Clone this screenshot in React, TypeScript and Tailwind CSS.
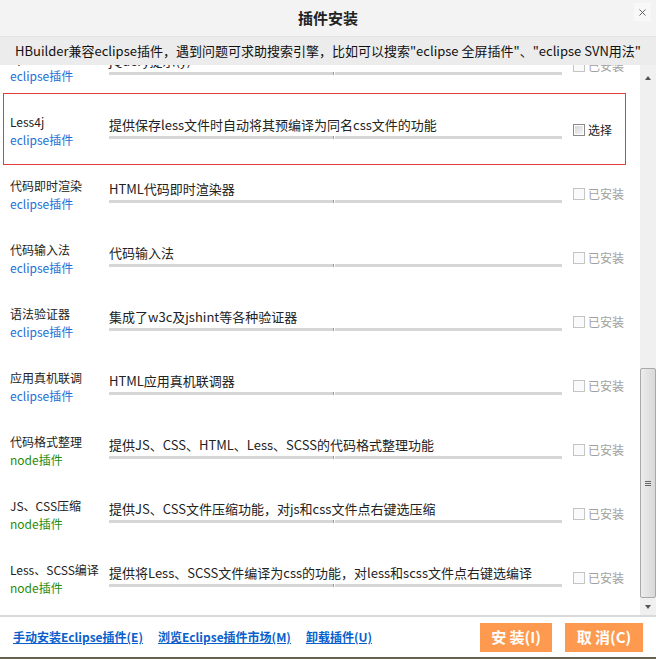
import { X } from "lucide-react";

type Plugin = {
  name: string;
  kind: "eclipse" | "node";
  desc: string;
  selected?: boolean;
};

const plugins: Plugin[] = [
  { name: "Aptana插件", kind: "eclipse", desc: "jQuery提示(y)" },
  { name: "Less4j", kind: "eclipse", desc: "提供保存less文件时自动将其预编译为同名css文件的功能", selected: true },
  { name: "代码即时渲染", kind: "eclipse", desc: "HTML代码即时渲染器" },
  { name: "代码输入法", kind: "eclipse", desc: "代码输入法" },
  { name: "语法验证器", kind: "eclipse", desc: "集成了w3c及jshint等各种验证器" },
  { name: "应用真机联调", kind: "eclipse", desc: "HTML应用真机联调器" },
  { name: "代码格式整理", kind: "node", desc: "提供JS、CSS、HTML、Less、SCSS的代码格式整理功能" },
  { name: "JS、CSS压缩", kind: "node", desc: "提供JS、CSS文件压缩功能，对js和css文件点右键选压缩" },
  { name: "Less、SCSS编译", kind: "node", desc: "提供将Less、SCSS文件编译为css的功能，对less和scss文件点右键选编译" },
];

function PluginRow({ p }: { p: Plugin }) {
  return (
    <div className="relative flex h-[64px] shrink-0 items-start">
      {p.selected && (
        <div className="pointer-events-none absolute -top-1 -bottom-1 left-0 right-0 border border-[#e23d3d]" />
      )}
      <div className="w-[106px] shrink-0 pl-[7px] pt-[16px] text-[12px] leading-[18px]">
        <div className="whitespace-nowrap text-[#222]">{p.name}</div>
        <div className={p.kind === "node" ? "text-[#2a8a0c]" : "text-[#1a6fd8]"}>
          {p.kind}插件
        </div>
      </div>
      <div className="w-[453px] shrink-0 pt-[19px]">
        <div className="whitespace-nowrap text-[13px] leading-[18px] text-[#222]">{p.desc}</div>
        <div className="mt-[2px] flex h-[3px]">
          <div className="w-[224px] bg-[#d6d6d6]" />
          <div className="w-px bg-[#9a9a9a]" />
          <div className="w-px bg-white" />
          <div className="flex-1 bg-[#d6d6d6]" />
        </div>
      </div>
      <div className="ml-[11px] flex items-center gap-[3px] pt-[25px] text-[12px] leading-[16px]">
        {p.selected ? (
          <>
            <span className="flex h-[12px] w-[12px] items-center justify-center border border-[#8a8a8a] bg-white">
              <span className="h-[8px] w-[8px] bg-gradient-to-br from-[#d8d8d8] to-[#f4f4f4]" />
            </span>
            <span className="text-[#222]">选择</span>
          </>
        ) : (
          <>
            <span className="h-[12px] w-[12px] border border-[#c4c4c4] bg-[#fafafa]" />
            <span className="text-[#a0a0a0]">已安装</span>
          </>
        )}
      </div>
    </div>
  );
}

export default function App() {
  return (
    <div className="flex h-[659px] w-[656px] flex-col overflow-hidden bg-white font-['Microsoft_YaHei','Noto_Sans_CJK_SC',sans-serif]">
      <div className="relative flex h-[37px] shrink-0 items-center justify-center border-b border-[#e4e4e4] bg-[#f3f3f3]">
        <span className="text-[15px] font-bold text-[#222]">插件安装</span>
        <span className="absolute right-[5px] top-[3px] flex h-[18px] w-[17px] items-center justify-center bg-[#f8f8f8] text-[#555]">
          <X size={11} strokeWidth={2} />
        </span>
      </div>

      <div className="relative z-10 flex h-[28px] shrink-0 items-center justify-center bg-[#ececec] text-[13px] text-[#111]">
        HBuilder兼容eclipse插件，遇到问题可求助搜索引擎，比如可以搜索"eclipse 全屏插件"、"eclipse SVN用法"
      </div>

      <div className="flex min-h-0 flex-1">
        <div className="flex-1 overflow-hidden">
          <div className="mt-[-32px] ml-[3px] mr-[14px] flex flex-col">
            {plugins.map((p) => (
              <PluginRow key={p.name} p={p} />
            ))}
          </div>
        </div>
        <div className="flex w-[16px] shrink-0 flex-col bg-[#f0f0f0]">
          <div className="flex h-[17px] items-end justify-center pb-[2px]">
            <span className="h-0 w-0 border-x-[3px] border-b-[4px] border-x-transparent border-b-[#555]" />
          </div>
          <div className="flex flex-1 flex-col">
            <div className="mt-[286px] flex h-[230px] items-center justify-center rounded-[2px] border border-[#a9a9a9] bg-gradient-to-r from-[#ececec] to-[#d9d9d9]">
              <div className="flex flex-col gap-[1px]">
                <span className="h-px w-[6px] bg-[#666]" />
                <span className="h-px w-[6px] bg-[#666]" />
                <span className="h-px w-[6px] bg-[#666]" />
              </div>
            </div>
          </div>
          <div className="flex h-[17px] items-center justify-center">
            <span className="h-0 w-0 border-x-[3px] border-t-[4px] border-x-transparent border-t-[#555]" />
          </div>
        </div>
      </div>

      <div className="h-[2px] shrink-0 bg-[#d9d9d9]" />

      <div className="flex h-[40px] shrink-0 items-center pl-[13px] pr-[13px]">
        <div className="flex gap-[15px] text-[12px] font-bold text-[#0b5fcc] underline">
          <a>手动安装Eclipse插件(E)</a>
          <a>浏览Eclipse插件市场(M)</a>
          <a>卸载插件(U)</a>
        </div>
        <div className="ml-auto flex gap-[13px]">
          <button className="h-[29px] w-[72px] bg-[#fe9a50] text-[15px] font-bold text-white">安 装(I)</button>
          <button className="h-[29px] w-[78px] bg-[#fe9a50] text-[15px] font-bold text-white">取 消(C)</button>
        </div>
      </div>

      <div className="h-[2px] shrink-0 bg-[#67624f]" />
    </div>
  );
}
